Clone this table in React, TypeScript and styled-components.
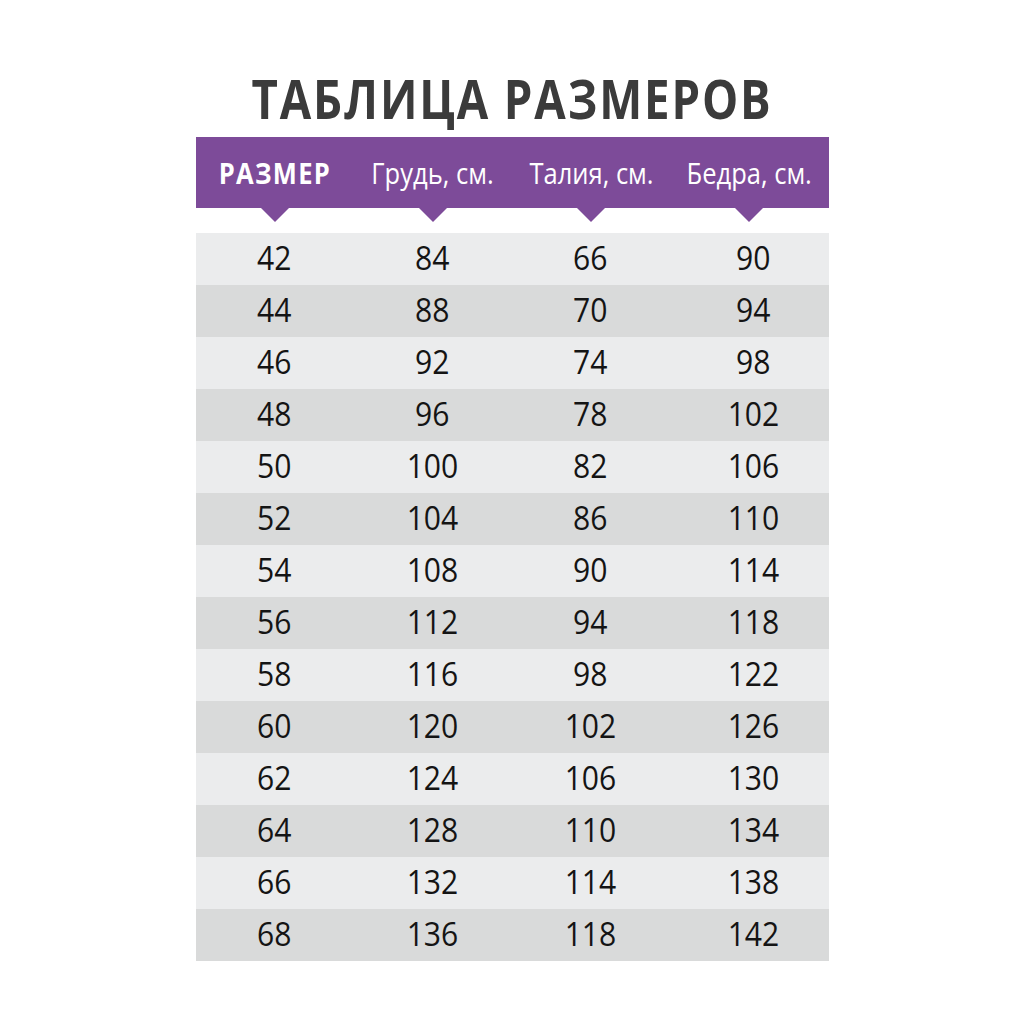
import React from "react";
import styled, { createGlobalStyle } from "styled-components";

const GlobalStyle = createGlobalStyle`
  html, body {
    margin: 0;
    padding: 0;
    background: #ffffff;
  }
  body {
    font-family: "Open Sans", "Liberation Sans", sans-serif;
  }
`;

const Page = styled.div`
  width: 1024px;
  height: 1024px;
  display: flex;
  flex-direction: column;
  align-items: center;
  padding-top: 66px;
  box-sizing: border-box;
`;

const Title = styled.h1`
  margin: 0;
  height: 71px;
  font-family: "Open Sans", sans-serif;
  font-weight: 700;
  font-size: 53px;
  line-height: 66px;
  letter-spacing: 2.2px;
  color: #3b3b3b;
  transform: scaleX(0.86);
`;

const Sheet = styled.div`
  width: 633px;
`;

const HeaderBar = styled.div`
  display: grid;
  grid-template-columns: repeat(4, 1fr);
  height: 71px;
  background: #7d4b99;
  margin-bottom: 25px;
`;

const HeadCell = styled.div<{ $strong?: boolean }>`
  position: relative;
  display: flex;
  align-items: center;
  justify-content: center;
  color: #ffffff;
  font-size: 29px;
  font-weight: ${(p) => (p.$strong ? 700 : 400)};
  letter-spacing: ${(p) => (p.$strong ? "1.5px" : "0")};
  padding-bottom: 1px;

  &::after {
    content: "";
    position: absolute;
    left: 50%;
    top: 100%;
    margin-left: -14px;
    border-left: 14px solid transparent;
    border-right: 14px solid transparent;
    border-top: 14px solid #7d4b99;
  }
`;

const HeadText = styled.span`
  display: inline-block;
  transform: scaleX(0.88);
  white-space: nowrap;
`;

const Row = styled.div<{ $shade: boolean }>`
  display: grid;
  grid-template-columns: 158px 158px 158px 159px;
  height: 52px;
  background: ${(p) => (p.$shade ? "#d9dada" : "#ebeced")};
`;

const Cell = styled.div<{ $shift?: number }>`
  display: flex;
  align-items: center;
  justify-content: center;
  font-size: 32px;
  font-weight: 500;
  color: #141414;
  padding-bottom: 4px;
  padding-left: ${(p) => p.$shift ?? 0}px;
`;

const Num = styled.span`
  display: inline-block;
  transform: scaleX(0.94);
`;

const sizes = [
  [42, 84, 66, 90],
  [44, 88, 70, 94],
  [46, 92, 74, 98],
  [48, 96, 78, 102],
  [50, 100, 82, 106],
  [52, 104, 86, 110],
  [54, 108, 90, 114],
  [56, 112, 94, 118],
  [58, 116, 98, 122],
  [60, 120, 102, 126],
  [62, 124, 106, 130],
  [64, 128, 110, 134],
  [66, 132, 114, 138],
  [68, 136, 118, 142],
];

// the last column sits a little right of its cell centre in the picture
const shifts = [0, 0, 0, 8];

const headers = ["Грудь, см.", "Талия, см.", "Бедра, см."];

const App: React.FC = () => {
  return (
    <>
      <GlobalStyle />
      <Page>
        <Title>ТАБЛИЦА РАЗМЕРОВ</Title>
        <Sheet>
          <HeaderBar>
            <HeadCell $strong>
              <HeadText>РАЗМЕР</HeadText>
            </HeadCell>
            {headers.map((h) => (
              <HeadCell key={h}>
                <HeadText>{h}</HeadText>
              </HeadCell>
            ))}
          </HeaderBar>
          {sizes.map((row, i) => (
            <Row key={row[0]} $shade={i % 2 === 1}>
              {row.map((v, j) => (
                <Cell key={j} $shift={shifts[j]}>
                  <Num>{v}</Num>
                </Cell>
              ))}
            </Row>
          ))}
        </Sheet>
      </Page>
    </>
  );
};

export default App;
